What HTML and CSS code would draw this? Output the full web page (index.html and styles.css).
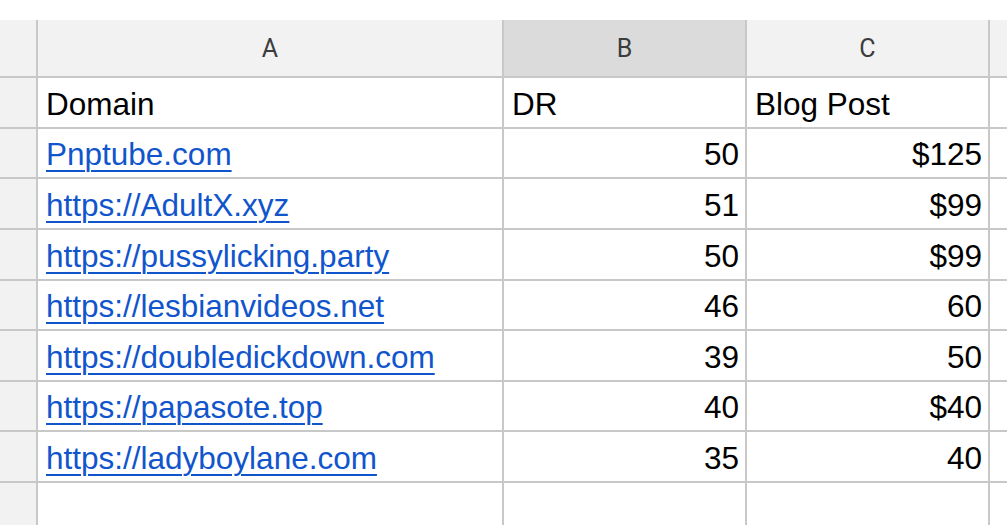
FILE: index.html
```html
<!DOCTYPE html>
<html>
<head>
<meta charset="utf-8">
<link rel="stylesheet" href="styles.css">
</head>
<body>
<div class="sheet">
  <div class="grid">
    <div class="corner"></div>
    <div class="colhead">A</div>
    <div class="colhead sel">B</div>
    <div class="colhead">C</div>
    <div class="colhead"></div>

    <div class="rowhead"></div>
    <div class="cell">Domain</div>
    <div class="cell">DR</div>
    <div class="cell">Blog Post</div>
    <div class="cell"></div>

    <div class="rowhead"></div>
    <div class="cell"><a class="link" href="#">Pnptube.com</a></div>
    <div class="cell num">50</div>
    <div class="cell num">$125</div>
    <div class="cell"></div>

    <div class="rowhead"></div>
    <div class="cell"><a class="link" href="#">https://AdultX.xyz</a></div>
    <div class="cell num">51</div>
    <div class="cell num">$99</div>
    <div class="cell"></div>

    <div class="rowhead"></div>
    <div class="cell"><a class="link" href="#">https://pussylicking.party</a></div>
    <div class="cell num">50</div>
    <div class="cell num">$99</div>
    <div class="cell"></div>

    <div class="rowhead"></div>
    <div class="cell"><a class="link" href="#">https://lesbianvideos.net</a></div>
    <div class="cell num">46</div>
    <div class="cell num">60</div>
    <div class="cell"></div>

    <div class="rowhead"></div>
    <div class="cell"><a class="link" href="#">https://doubledickdown.com</a></div>
    <div class="cell num">39</div>
    <div class="cell num">50</div>
    <div class="cell"></div>

    <div class="rowhead"></div>
    <div class="cell"><a class="link" href="#">https://papasote.top</a></div>
    <div class="cell num">40</div>
    <div class="cell num">$40</div>
    <div class="cell"></div>

    <div class="rowhead"></div>
    <div class="cell"><a class="link" href="#">https://ladyboylane.com</a></div>
    <div class="cell num">35</div>
    <div class="cell num">40</div>
    <div class="cell"></div>

    <div class="rowhead"></div>
    <div class="cell"></div>
    <div class="cell"></div>
    <div class="cell"></div>
    <div class="cell"></div>
  </div>
</div>
</body>
</html>
```
FILE: styles.css
```css
html, body {
  margin: 0;
  padding: 0;
  background: #ffffff;
  overflow: hidden;
}
.sheet {
  width: 1007px;
  height: 525px;
  padding-top: 20px;
  box-sizing: border-box;
  overflow: hidden;
}
.grid {
  display: grid;
  grid-template-columns: 36px 464px 241px 241px 40px;
  grid-template-rows: 56px repeat(8, 48.625px) 60px;
  gap: 2px;
  background: #c8c8c8;
  width: 1064px;
  font-family: "Liberation Sans", Arial, sans-serif;
}
.corner, .rowhead, .colhead {
  background: #f2f2f2;
}
.colhead {
  display: flex;
  align-items: center;
  justify-content: center;
  font-family: Roboto, "Liberation Sans", sans-serif;
  font-size: 25px;
  color: #3c3c3c;
}
.colhead.sel {
  background: #dbdbdb;
}
.cell {
  background: #ffffff;
  display: flex;
  align-items: flex-end;
  padding: 0 6px 4px 8px;
  font-size: 31.5px;
  color: #000000;
  white-space: nowrap;
  overflow: hidden;
}
.cell.num {
  justify-content: flex-end;
}
.link {
  color: #1155cc;
  text-decoration: underline;
  text-decoration-thickness: 2px;
  text-underline-offset: 5px;
}
```
